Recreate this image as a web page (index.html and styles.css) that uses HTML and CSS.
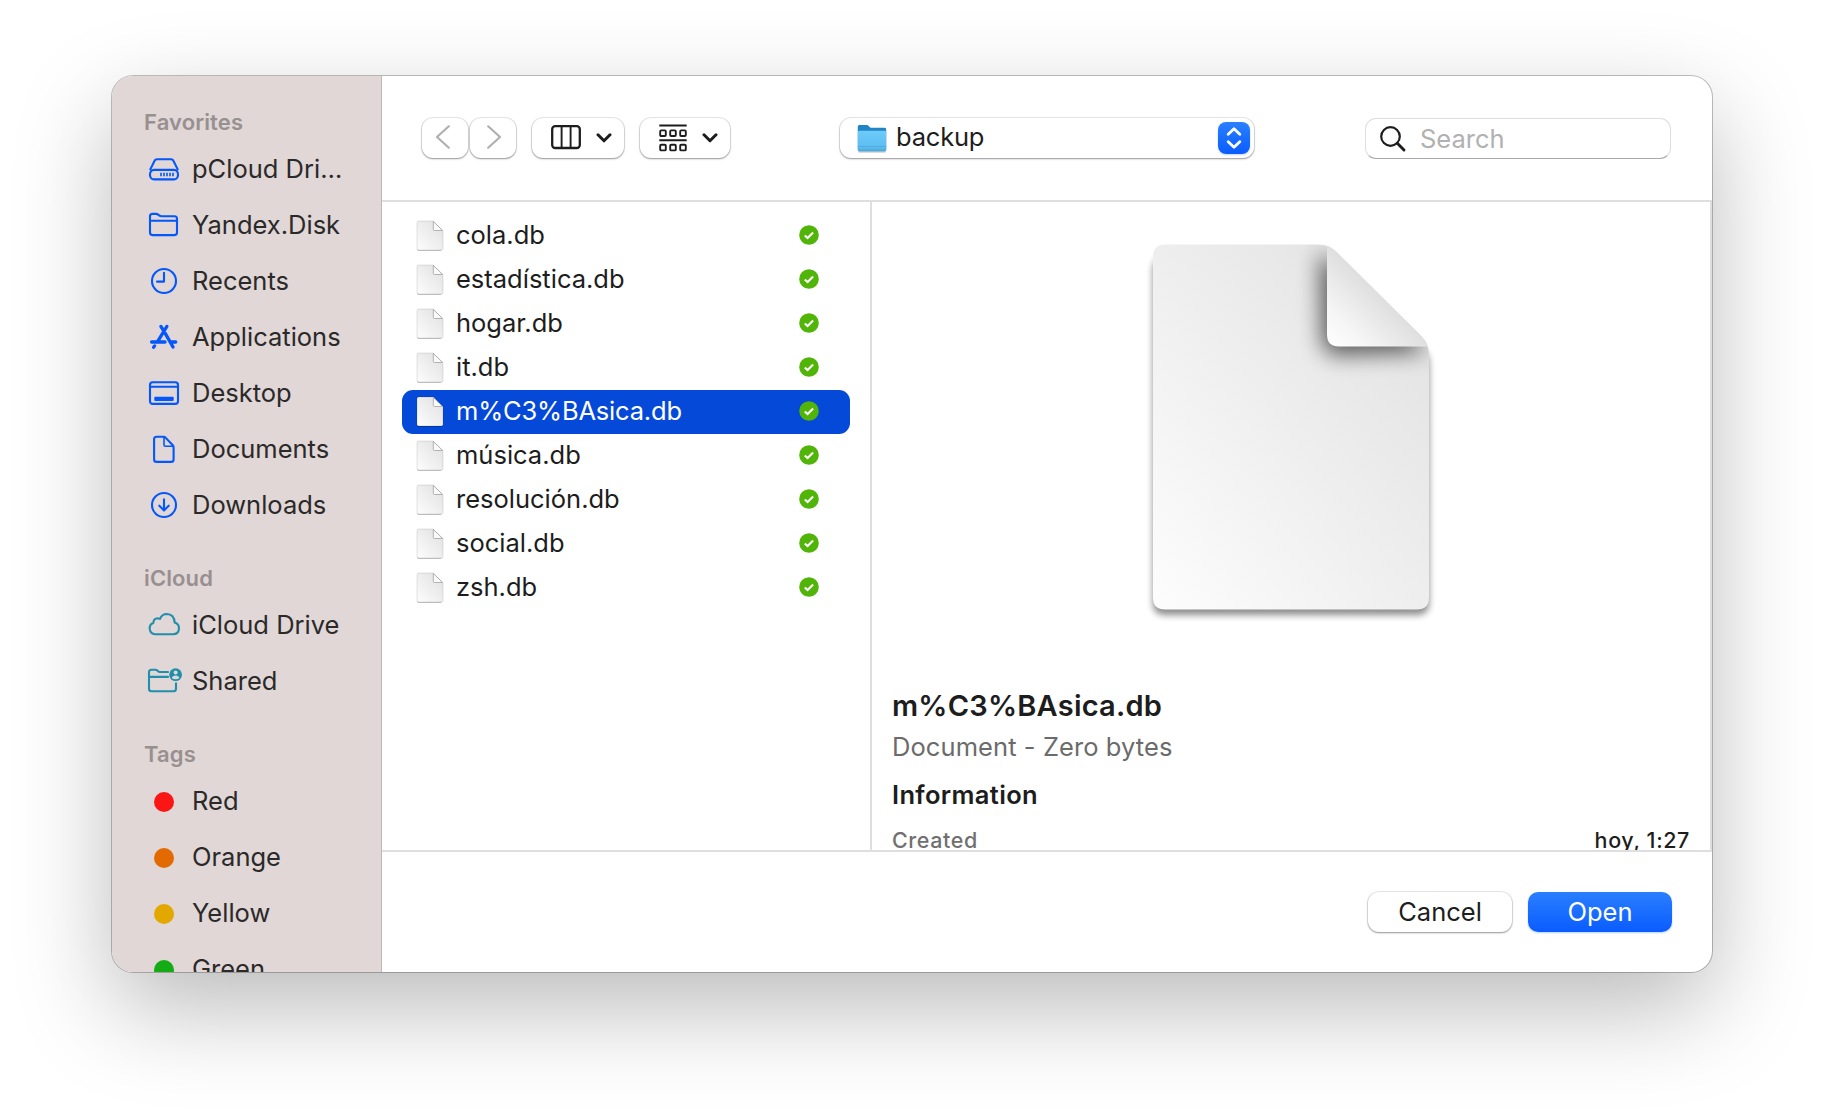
FILE: index.html
```html
<!DOCTYPE html>
<html lang="en">
<head>
<meta charset="utf-8">
<title>Open</title>
<link rel="stylesheet" href="styles.css">
</head>
<body>
<svg class="defs" width="0" height="0" aria-hidden="true">
  <defs>
    <linearGradient id="paper" x1="0" y1="1" x2="1" y2="0"><stop offset="0" stop-color="#fdfdfd"/><stop offset=".5" stop-color="#eeeeee"/><stop offset="1" stop-color="#e0e0e0"/></linearGradient>
    <linearGradient id="curl" x1="0" y1="1" x2=".5" y2=".5"><stop offset="0" stop-color="#fff"/><stop offset=".4" stop-color="#f5f5f5"/><stop offset="1" stop-color="#dfdfdf"/></linearGradient>
    <linearGradient id="folderFront" x1="0" y1="0" x2="0" y2="1"><stop offset="0" stop-color="#6ecbfa"/><stop offset=".8" stop-color="#5dbdf0"/><stop offset="1" stop-color="#49a5d8"/></linearGradient>
    <symbol id="file" viewBox="0 0 30 36">
      <path d="M2.5 4h15.8l8.700 8.700v17.600q0 1.700-1.700 1.700H3.700Q2 32 2 30.300V4.900z" fill="#000" opacity=".22" transform="translate(0 1)"/>
      <path d="M3.700 3h14.600L28 12.700v17.600q0 1.700-1.700 1.700H3.700Q2 32 2 30.300V4.700Q2 3 3.700 3z" fill="url(#paper)" stroke="#000" stroke-opacity=".13" stroke-width=".8"/>
      <path d="M18.300 3.400v7.900q0 1.200 1.200 1.200h8z" fill="#fafafa" stroke="#aaa" stroke-width=".9"/>
    </symbol>
    <symbol id="synced" viewBox="0 0 20 20">
      <circle cx="10" cy="10" r="9.800" fill="#50b508"/>
      <path d="M5.800 10.400l2.800 2.700 5.500-5.600" fill="none" stroke="#fff" stroke-width="2.100"/>
    </symbol>
    <symbol id="down" viewBox="0 0 16 10"><path d="M2 1.800l6 6 6-6" fill="none" stroke="#1d1d1d" stroke-width="3" stroke-linecap="round" stroke-linejoin="round"/></symbol>
  </defs>
</svg>

<div class="dialog">
  <nav class="sidebar">
    <h2>Favorites</h2>
    <ul class="blue">
      <li><svg viewBox="0 0 36 56"><path d="M4.300 28.400L8.600 19.700Q9.300 18.200 11 18.200H25Q26.700 18.200 27.400 19.700L31.700 28.400M8 28.900H28A3.900 4.600 0 0 1 28 38.400H8A3.900 4.600 0 0 1 8 28.900z"/><path class="thin" d="M15 31.800v3.400M18 31.800v3.400M21 31.800v3.400M24 31.800v3.400M27 31.800v3.400"/></svg><span>pCloud Dri…</span></li>
      <li><svg viewBox="0 0 36 56"><path d="M4 35.600V19.400Q4 16.900 6.500 16.900H10Q11.300 16.900 12.200 17.600L13.500 18.600Q14.300 19.200 15.600 19.200H28.500Q31 19.200 31 21.700V35.600Q31 38.100 28.500 38.100H6.500Q4 38.100 4 35.600zM4 23.800H31"/></svg><span>Yandex.Disk</span></li>
      <li><svg viewBox="0 0 36 56"><circle cx="18" cy="28" r="12"/><path d="M18 19.800V28.600H11"/></svg><span>Recents</span></li>
      <li><svg viewBox="0 0 36 56"><path class="bold" d="M20.900 17.400L11.400 32.800M14.900 17.400L18 22.300M19.400 24.600L27 38M5.600 33H19M25.300 33H29.700M8.600 36.900L7.600 38.300"/></svg><span>Applications</span></li>
      <li><svg viewBox="0 0 36 56"><rect x="4" y="17.300" width="28" height="21.600" rx="2.600"/><path d="M4 21.800H32"/><rect class="solid" x="8.300" y="31.800" width="19.400" height="4.200" rx="1"/></svg><span>Desktop</span></li>
      <li><svg viewBox="0 0 36 56"><path d="M10.600 15.700H17.300Q18.600 15.700 19.500 16.600L26.800 24.300Q27.600 25.200 27.600 26.500V38.400Q27.600 40.900 25.100 40.900H10.600Q8.100 40.900 8.100 38.400V18.200Q8.100 15.700 10.600 15.700z"/><path class="thin" d="M18 16V24Q18 25.300 19.300 25.300H27"/></svg><span>Documents</span></li>
      <li><svg viewBox="0 0 36 56"><circle cx="18" cy="28" r="12"/><path d="M18 22.400V33M13.300 28.700L18 33.400L22.700 28.700"/></svg><span>Downloads</span></li>
    </ul>
    <h2>iCloud</h2>
    <ul class="teal">
      <li><svg viewBox="0 0 36 56"><path d="M9 37.200A6 6 0 0 1 7.400 25.700Q7.600 21.600 11.600 21.300Q13 21.300 14 22Q15.800 17 20.800 17Q28.200 17.400 28.700 25.600Q33 27 33 31.600Q32.500 37.200 27 37.200z"/></svg><span>iCloud Drive</span></li>
      <li><svg viewBox="0 0 36 56"><path d="M22 19H13.800Q12.800 19 12 18.200L11.300 17.500Q10.500 16.700 9.400 16.700H5.500Q3 16.700 3 19.200V35.800Q3 38.300 5.500 38.300H27.500Q30 38.300 30 35.800V30.300M3 23.900H22"/><circle class="solid" cx="29.600" cy="21.700" r="6.400"/><circle class="cut" cx="29.600" cy="19.600" r="2"/><path class="cut" d="M25.900 25.200Q26.300 22.600 29.600 22.600T33.300 25.200Q29.600 27.400 25.900 25.200z"/></svg><span>Shared</span></li>
    </ul>
    <h2>Tags</h2>
    <ul class="tags">
      <li><i class="red"></i><span>Red</span></li>
      <li><i class="orange"></i><span>Orange</span></li>
      <li><i class="yellow"></i><span>Yellow</span></li>
      <li><i class="green"></i><span>Green</span></li>
    </ul>
  </nav>

  <main class="main">
    <header class="toolbar">
      <div class="history">
        <button class="control"><svg width="16" height="24" viewBox="0 0 16 24"><path d="M13.800 1.300L2 12L13.800 22.700" fill="none" stroke="#b0b0b0" stroke-width="2.200" stroke-linecap="round" stroke-linejoin="round"/></svg></button>
        <button class="control"><svg width="16" height="24" viewBox="0 0 16 24"><path d="M2.200 1.300L14 12L2.200 22.700" fill="none" stroke="#b0b0b0" stroke-width="2.200" stroke-linecap="round" stroke-linejoin="round"/></svg></button>
      </div>
      <button class="control view-mode">
        <svg width="30" height="26" viewBox="0 0 30 26"><rect x="1.200" y="2.200" width="27.600" height="21.800" rx="3" fill="none" stroke="#1d1d1d" stroke-width="2.300"/><path d="M10.600 2V24M19.600 2V24" stroke="#1d1d1d" stroke-width="1.900"/></svg>
        <svg class="caret" width="16" height="10"><use href="#down"/></svg>
      </button>
      <button class="control grouping">
        <svg width="28" height="28" viewBox="0 0 28 28" fill="none" stroke="#1d1d1d" stroke-width="1.900"><path d="M.3 1.500H27.700M.3 16.200H27.700"/><rect x="1.200" y="6.400" width="5.600" height="5.600" rx="1"/><rect x="11.200" y="6.400" width="5.600" height="5.600" rx="1"/><rect x="21.200" y="6.400" width="5.600" height="5.600" rx="1"/><rect x="1.200" y="20.800" width="5.600" height="5.600" rx="1"/><rect x="11.200" y="20.800" width="5.600" height="5.600" rx="1"/><rect x="21.200" y="20.800" width="5.600" height="5.600" rx="1"/></svg>
        <svg class="caret" width="16" height="10"><use href="#down"/></svg>
      </button>
      <div class="control location">
        <svg width="30" height="29" viewBox="0 0 30 29"><path d="M.8 26V2.500Q.8 1 2.300 1H10.500L13.500 3.800H27.700Q29.200 3.800 29.200 5.300V26z" fill="#1f85c4"/><path d="M.8 8.200Q.8 6.700 2.300 6.700H27.700Q29.200 6.700 29.200 8.200V26Q29.200 27.500 27.700 27.500H2.300Q.8 27.500 .8 26z" fill="url(#folderFront)"/><path d="M.8 22.500H29.200" stroke="#4ba9dc" stroke-width=".8"/><path d="M1.500 28H28.500" stroke="#888" stroke-opacity=".6" stroke-width="1"/></svg>
        <span>backup</span>
        <div class="stepper"><svg width="18" height="24" viewBox="0 0 18 24"><path d="M3.200 8.300L9 2.700L14.800 8.300M3.200 15.700L9 21.300L14.800 15.700" fill="none" stroke="#fff" stroke-width="2.800" stroke-linecap="round" stroke-linejoin="round"/></svg></div>
      </div>
      <div class="search">
        <svg width="28" height="28" viewBox="0 0 28 28"><circle cx="11.500" cy="11.500" r="9.300" fill="none" stroke="#1d1d1d" stroke-width="2.200"/><path d="M18.300 18.300L25 25" stroke="#1d1d1d" stroke-width="2.900" stroke-linecap="round"/></svg>
        <span>Search</span>
      </div>
    </header>

    <section class="browser">
      <ul class="files">
        <li><svg class="doc"><use href="#file"/></svg><span>cola.db</span><svg class="check"><use href="#synced"/></svg></li>
        <li><svg class="doc"><use href="#file"/></svg><span>estadística.db</span><svg class="check"><use href="#synced"/></svg></li>
        <li><svg class="doc"><use href="#file"/></svg><span>hogar.db</span><svg class="check"><use href="#synced"/></svg></li>
        <li><svg class="doc"><use href="#file"/></svg><span>it.db</span><svg class="check"><use href="#synced"/></svg></li>
        <li class="selected"><svg class="doc"><use href="#file"/></svg><span>m%C3%BAsica.db</span><svg class="check"><use href="#synced"/></svg></li>
        <li><svg class="doc"><use href="#file"/></svg><span>música.db</span><svg class="check"><use href="#synced"/></svg></li>
        <li><svg class="doc"><use href="#file"/></svg><span>resolución.db</span><svg class="check"><use href="#synced"/></svg></li>
        <li><svg class="doc"><use href="#file"/></svg><span>social.db</span><svg class="check"><use href="#synced"/></svg></li>
        <li><svg class="doc"><use href="#file"/></svg><span>zsh.db</span><svg class="check"><use href="#synced"/></svg></li>
      </ul>
      <article class="preview">
        <svg class="art" width="320" height="400" viewBox="0 0 320 400">
          <defs>
            <filter id="soft" x="-20%" y="-20%" width="140%" height="140%"><feGaussianBlur stdDeviation="3.500"/></filter>
            <filter id="foldBlur" x="-60%" y="-60%" width="220%" height="220%"><feGaussianBlur stdDeviation="11"/></filter>
            <clipPath id="sheet"><path d="M34 22.500H188Q198 22.500 205 29.500L291 115Q298 122 298 134V375.500Q298 387.500 286 387.500H34Q22 387.500 22 375.500V34.500Q22 22.500 34 22.500z"/></clipPath>
          </defs>
          <path d="M34 30H188Q198 30 205 37L291 120Q298 127 298 136V375Q298 387 286 387H34Q22 387 22 375V42Q22 30 34 30z" fill="#000" opacity=".45" filter="url(#soft)" transform="translate(0 6)"/>
          <g clip-path="url(#sheet)">
            <rect x="22" y="22" width="276" height="366" fill="url(#paper)"/>
            <path d="M192 36L194 116Q195 130 208 130L290 127L240 75z" fill="#000" stroke="#000" stroke-width="6" opacity=".62" filter="url(#foldBlur)"/>
            <path d="M196 22V112.500Q196 124.500 208 124.500H300L296 119L202 25z" fill="url(#curl)"/>
          </g>
        </svg>
        <h1>m%C3%BAsica.db</h1>
        <p class="kind">Document - Zero bytes</p>
        <h3>Information</h3>
        <div class="meta"><span>Created</span><b>hoy, 1:27</b></div>
      </article>
    </section>

    <footer class="actions">
      <button class="control cancel">Cancel</button>
      <button class="open">Open</button>
    </footer>
  </main>
</div>
</body>
</html>
```
FILE: styles.css
```css
* { box-sizing: border-box; margin: 0; padding: 0; }

body {
  height: 1120px;
  overflow: hidden;
  padding: 76px 112px 0;
  background: #fff;
  font-family: Inter, "Liberation Sans", sans-serif;
  font-size: 25.5px;
  letter-spacing: 0;
  color: #1d1d1d;
}

ul { list-style: none; }
svg { display: block; flex: none; }
.defs { position: absolute; }

.dialog {
  display: flex;
  width: 1600px;
  height: 896px;
  overflow: hidden;
  border-radius: 21px;
  background: #fff;
  box-shadow: 0 0 0 1px rgba(0, 0, 0, .24), 0 36px 96px rgba(0, 0, 0, .27);
}

/* Sidebar */
.sidebar {
  flex: none;
  width: 270px;
  padding-top: 27px;
  overflow: hidden;
  background: #e0d7d6;
  border-right: 1px solid #c0b8b7;
  color: #2b2929;
}
.sidebar h2 {
  height: 38px;
  padding-left: 32px;
  font-size: 22px;
  line-height: 38px;
  font-weight: 600;
  letter-spacing: .12px;
  color: #989090;
}
.sidebar ul + h2 { margin-top: 26px; }
.sidebar li {
  display: flex;
  align-items: center;
  height: 56px;
  padding-left: 34px;
  line-height: 56px;
}
.sidebar li svg {
  width: 36px;
  height: 56px;
  margin-right: 10px;
  fill: none;
  stroke: currentColor;
  stroke-width: 2.1;
  stroke-linecap: round;
  stroke-linejoin: round;
}
.sidebar li span { color: #2b2929; white-space: nowrap; }
.blue { color: #0357fb; }
.teal { color: #218fac; }
.sidebar .thin { stroke-width: 1.6; stroke-linecap: butt; }
.sidebar .bold { stroke-width: 3.3; }
.sidebar .solid { fill: currentColor; stroke: none; }
.sidebar .cut { fill: #e0d7d6; stroke: none; }
.tags i {
  width: 20px;
  height: 20px;
  margin: 1px 18px 0 8px;
  border-radius: 50%;
}
.red { background: #fb1616; }
.orange { background: #e36a00; }
.yellow { background: #e2a800; }
.green { background: #14ac14; }

/* Toolbar */
.main { display: flex; flex: 1; flex-direction: column; min-width: 0; }
.toolbar {
  display: flex;
  flex: none;
  height: 126px;
  padding: 42px 41px 0 40px;
  border-bottom: 2px solid #dfdfdf;
}
button { border: 0; font: inherit; letter-spacing: inherit; color: inherit; }
.control {
  display: flex;
  align-items: center;
  justify-content: center;
  height: 40px;
  border-radius: 11px;
  background: #fff;
  box-shadow: 0 0 0 1px rgba(0, 0, 0, .09), 0 1px 2px rgba(0, 0, 0, .36);
}
.history { display: flex; gap: 2px; margin-right: 16px; }
.history .control { width: 46px; padding-bottom: 2px; }
.history .control:first-child { padding-right: 4px; }
.history .control:last-child { padding-left: 2px; }
.caret { margin-top: 1px; }
.view-mode { width: 92px; gap: 15px; margin-right: 16px; padding-left: 6px; padding-bottom: 2px; }
.grouping { width: 90px; gap: 15px; margin-right: 110px; padding-left: 6px; padding-bottom: 1px; }
.location { width: 414px; justify-content: flex-start; padding: 0 4px 0 17px; margin-right: 111px; }
.location span { flex: 1; padding: 0 0 3px 9px; letter-spacing: -.2px; }
.stepper {
  display: flex;
  align-items: center;
  justify-content: center;
  width: 32px;
  height: 32px;
  border-radius: 8px;
  background: linear-gradient(#2a80ff, #0a5cff);
  box-shadow: 0 1px 2px rgba(10, 92, 255, .25);
}
.search {
  display: flex;
  align-items: center;
  width: 306px;
  height: 41px;
  padding-left: 13px;
  border: 1px solid #dedede;
  border-bottom-color: #a9a9a9;
  border-radius: 11px;
  color: #b1b1b1;
}
.search span { padding-left: 13px; }

/* File column and preview */
.browser { display: flex; height: 648px; border-right: 2px solid #dfdfdf; overflow: hidden; }
.files { width: 490px; padding: 12px 20px 0; border-right: 2px solid #dfdfdf; }
.files li {
  display: flex;
  align-items: center;
  height: 44px;
  padding: 0 31px 0 13px;
  border-radius: 11px;
}
.files span { flex: 1; padding: 0 0 3px 11px; }
.files .selected { background: #0549d9; color: #fff; letter-spacing: -.18px; }
.doc { width: 30px; height: 36px; }
.check { width: 20px; height: 20px; margin-bottom: 2px; }

.preview { flex: 1; padding: 20px 20px 0; }
.art { margin: 0 auto 64px; }
.preview h1 { font-size: 29px; line-height: 40px; font-weight: 600; letter-spacing: .22px; }
.kind { margin-top: 3px; line-height: 36px; color: #6b6b6b; letter-spacing: .08px; }
.preview h3 { margin-top: 12px; font-size: 25.5px; line-height: 36px; font-weight: 600; letter-spacing: .34px; }
.meta {
  display: flex;
  justify-content: space-between;
  margin-top: 12px;
  font-size: 21.5px;
  line-height: 30px;
  font-weight: 500;
  letter-spacing: .6px;
  color: #707070;
}
.meta b { font-weight: 500; color: #1d1d1d; }

/* Footer */
.actions {
  display: flex;
  gap: 16px;
  justify-content: flex-end;
  height: 122px;
  padding: 40px 40px 0 0;
  border-top: 2px solid #dfdfdf;
}
.actions button { width: 144px; height: 40px; padding-bottom: 2px; }
.open {
  border-radius: 10px;
  background: linear-gradient(#2a7fff, #0a5cff);
  box-shadow: 0 1px 2px rgba(10, 92, 255, .3);
  color: #fff;
}
```
